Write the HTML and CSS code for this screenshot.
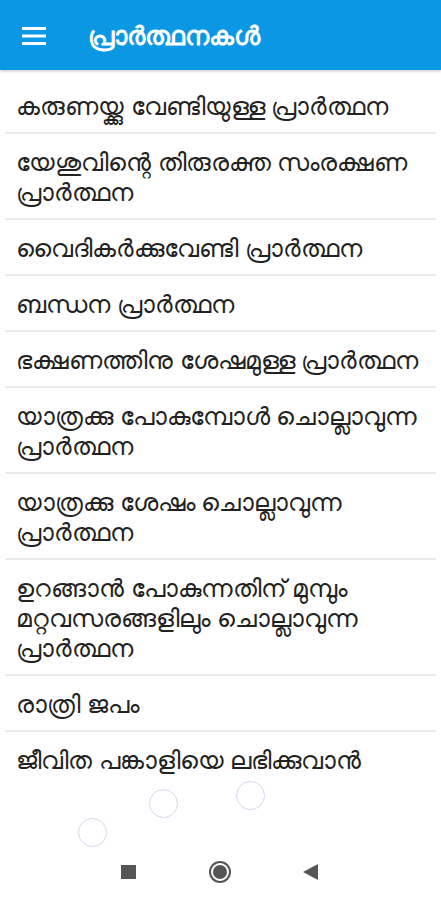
FILE: index.html
```html
<!DOCTYPE html>
<html lang="ml">
<head>
<meta charset="utf-8">
<title>പ്രാർത്ഥനകൾ</title>
<link rel="stylesheet" href="styles.css">
</head>
<body>
<div class="screen">
  <header class="appbar">
    <button class="menu" aria-label="menu">
      <svg width="24" height="18" viewBox="0 0 24 18"><rect x="0" y="0" width="24" height="3" fill="#fff"/><rect x="0" y="7.5" width="24" height="3" fill="#fff"/><rect x="0" y="15" width="24" height="3" fill="#fff"/></svg>
    </button>
    <h1 class="title">പ്രാർത്ഥനകൾ</h1>
  </header>
  <ul class="list">
    <li class="item">കരുണയ്ക്കു വേണ്ടിയുള്ള പ്രാർത്ഥന</li>
    <li class="item">യേശുവിന്റെ തിരുരക്ത സംരക്ഷണ പ്രാർത്ഥന</li>
    <li class="item">വൈദികർക്കുവേണ്ടി പ്രാർത്ഥന</li>
    <li class="item">ബന്ധന പ്രാർത്ഥന</li>
    <li class="item">ഭക്ഷണത്തിനു ശേഷമുള്ള പ്രാർത്ഥന</li>
    <li class="item">യാത്രക്കു പോകുമ്പോൾ ചൊല്ലാവുന്ന പ്രാർത്ഥന</li>
    <li class="item">യാത്രക്കു ശേഷം ചൊല്ലാവുന്ന പ്രാർത്ഥന</li>
    <li class="item">ഉറങ്ങാൻ പോകുന്നതിന് മുമ്പും മറ്റവസരങ്ങളിലും ചൊല്ലാവുന്ന പ്രാർത്ഥന</li>
    <li class="item">രാത്രി ജപം</li>
    <li class="item last">ജീവിത പങ്കാളിയെ ലഭിക്കുവാൻ</li>
  </ul>
  <span class="touch t1"></span>
  <span class="touch t2"></span>
  <span class="touch t3"></span>
  <nav class="navbar">
    <span class="nav-square"></span>
    <span class="nav-home"><span class="nav-home-dot"></span></span>
    <svg class="nav-back" width="15" height="16" viewBox="0 0 15 16"><polygon points="15,0 15,16 0,8" fill="#555"/></svg>
  </nav>
</div>
</body>
</html>
```

FILE: styles.css
```css
* { box-sizing: border-box; }
html, body { margin: 0; padding: 0; background: #fff; }
body { font-family: "Noto Sans", "DejaVu Sans", sans-serif; }
.screen { position: relative; width: 441px; height: 900px; overflow: hidden; background: #fff; display: flex; flex-direction: column; }
.appbar { height: 70px; background: #0a98e4; display: flex; align-items: center; padding-left: 22px; box-shadow: 0 1px 3px rgba(0,0,0,0.25); position: relative; z-index: 1; flex-shrink: 0; }
.menu { background: none; border: 0; padding: 0; width: 24px; height: 18px; display: flex; margin-top: 2px; }
.title { margin: 0 0 0 42px; color: #fff; font-size: 26px; font-weight: 700; line-height: 32px; }
.list { list-style: none; margin: 0; padding: 8px 5px 0 5px; }
.item { padding: 12px 0 12px 11px; font-size: 25px; line-height: 30px; color: #222; border-bottom: 2px solid #ebebeb; }
.item.last { border-bottom: 0; }
.touch { position: absolute; width: 29px; height: 29px; border: 1.5px solid #d6d6f0; border-radius: 50%; }
.t1 { left: 78px; top: 818px; }
.t2 { left: 149px; top: 789px; }
.t3 { left: 236px; top: 781px; }
.navbar { margin-top: auto; height: 56px; display: flex; align-items: center; padding: 0 0 0 121px; }
.nav-square { width: 15px; height: 14px; background: #555; }
.nav-home { margin-left: 73px; width: 22px; height: 22px; border-radius: 50%; border: 2px solid #555; display: flex; align-items: center; justify-content: center; }
.nav-home-dot { width: 14px; height: 14px; border-radius: 50%; background: #555; }
.nav-back { margin-left: 72px; }
```
